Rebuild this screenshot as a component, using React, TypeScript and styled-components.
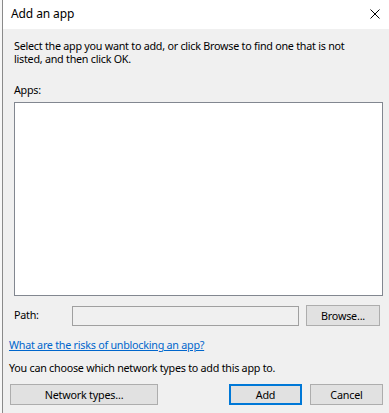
import React from "react"
import styled, { createGlobalStyle } from "styled-components"

const GlobalStyle = createGlobalStyle`
    html, body {
        margin: 0;
        padding: 0;
        background: #ffffff;
    }
    #root {
        width: 389px;
        height: 413px;
    }
`

const Screen = styled.div`
    display: flex;
    width: 389px;
    height: 413px;
    overflow: hidden;
    font-family: "Noto Sans", "Open Sans", sans-serif;
    font-size: 10.75px;
    letter-spacing: -0.25px;
    color: #000000;
`

const BehindStrip = styled.div`
    width: 2px;
    background: #f7f7f7;
`

const Dialog = styled.div`
    flex: 1;
    display: flex;
    flex-direction: column;
    border-left: 1px solid #8a8a8a;
    background: #f0f0f0;
`

const TitleBar = styled.div`
    height: 29px;
    display: flex;
    align-items: center;
    justify-content: space-between;
    padding: 0 8px 0 8px;
    background: #ffffff;
`

const Title = styled.div`
    font-size: 12px;
    letter-spacing: -0.1px;
    padding-bottom: 2px;
`

const CloseIcon = styled.svg`
    width: 10px;
    height: 10px;
    margin-right: 1px;
    margin-bottom: 2px;
`

const Body = styled.div`
    flex: 1;
    display: flex;
    flex-direction: column;
    padding: 11px 6px 0 6px;
`

const Intro = styled.p`
    margin: 0 0 0 5px;
    line-height: 13px;
`

const Label = styled.div`
    margin: 18px 0 0 5px;
    line-height: 12px;
`

const ListBox = styled.div`
    margin: 6px 0 0 5px;
    height: 192px;
    background: #ffffff;
    border: 1px solid #828790;
`

const PathRow = styled.div`
    display: flex;
    align-items: center;
    margin: 9px 0 0 5px;
`

const PathLabel = styled.div`
    width: 58px;
    padding-bottom: 2px;
`

const PathInput = styled.div`
    width: 225px;
    height: 18px;
    border: 1px solid #a0a0a0;
    background: #f0f0f0;
`

const Button = styled.button<{ $width: number; $primary?: boolean }>`
    box-sizing: border-box;
    width: ${({ $width }) => $width}px;
    height: 21px;
    padding: 0;
    font-family: inherit;
    font-size: 10.75px;
    letter-spacing: -0.2px;
    color: #000000;
    background: #e1e1e1;
    border: ${({ $primary }) =>
        $primary ? "2px solid #0078d7" : "1px solid #adadad"};
`

const BrowseButton = styled(Button)`
    margin-left: 7px;
`

const Link = styled.a`
    margin: 12px 0 0 0;
    color: #0066cc;
    text-decoration: underline;
    line-height: 14px;
`

const Note = styled.div`
    margin: 9px 0 0 0;
    line-height: 14px;
`

const ButtonRow = styled.div`
    display: flex;
    margin-top: 9px;
    padding: 0 0 0 1px;
`

const Spacer = styled.div`
    flex: 1;
`

const ButtonGap = styled.div`
    width: 8px;
`

export default function App() {
    return (
        <>
            <GlobalStyle />
            <Screen>
                <BehindStrip />
                <Dialog>
                    <TitleBar>
                        <Title>Add an app</Title>
                        <CloseIcon viewBox="0 0 10 10">
                            <path
                                d="M0.5 0.5 L9.5 9.5 M9.5 0.5 L0.5 9.5"
                                stroke="#000"
                                strokeWidth="1"
                                fill="none"
                            />
                        </CloseIcon>
                    </TitleBar>
                    <Body>
                        <Intro>
                            Select the app you want to add, or click Browse to
                            find one that is not
                            <br />
                            listed, and then click OK.
                        </Intro>
                        <Label>Apps:</Label>
                        <ListBox />
                        <PathRow>
                            <PathLabel>Path:</PathLabel>
                            <PathInput />
                            <BrowseButton $width={74}>Browse...</BrowseButton>
                        </PathRow>
                        <Link href="#">
                            What are the risks of unblocking an app?
                        </Link>
                        <Note>
                            You can choose which network types to add this app
                            to.
                        </Note>
                        <ButtonRow>
                            <Button $width={148}>Network types...</Button>
                            <Spacer />
                            <Button $width={73} $primary>
                                Add
                            </Button>
                            <ButtonGap />
                            <Button $width={73}>Cancel</Button>
                        </ButtonRow>
                    </Body>
                </Dialog>
            </Screen>
        </>
    )
}
